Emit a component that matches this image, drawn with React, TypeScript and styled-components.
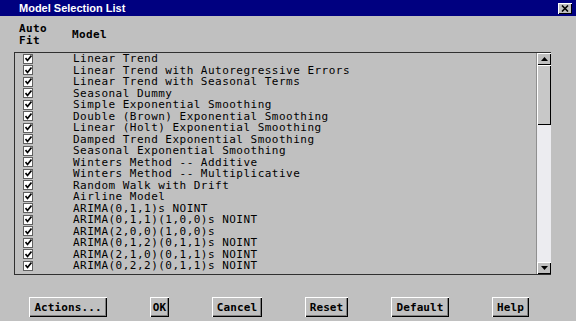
import styled, { createGlobalStyle } from "styled-components";

const models = [
  "Linear Trend",
  "Linear Trend with Autoregressive Errors",
  "Linear Trend with Seasonal Terms",
  "Seasonal Dummy",
  "Simple Exponential Smoothing",
  "Double (Brown) Exponential Smoothing",
  "Linear (Holt) Exponential Smoothing",
  "Damped Trend Exponential Smoothing",
  "Seasonal Exponential Smoothing",
  "Winters Method -- Additive",
  "Winters Method -- Multiplicative",
  "Random Walk with Drift",
  "Airline Model",
  "ARIMA(0,1,1)s NOINT",
  "ARIMA(0,1,1)(1,0,0)s NOINT",
  "ARIMA(2,0,0)(1,0,0)s",
  "ARIMA(0,1,2)(0,1,1)s NOINT",
  "ARIMA(2,1,0)(0,1,1)s NOINT",
  "ARIMA(0,2,2)(0,1,1)s NOINT",
];

const buttons = [
  { label: "Actions...", width: 78 },
  { label: "OK", width: 19 },
  { label: "Cancel", width: 50 },
  { label: "Reset", width: 43 },
  { label: "Default", width: 58 },
  { label: "Help", width: 37 },
];

const GlobalStyle = createGlobalStyle`
  html, body {
    margin: 0;
    padding: 0;
    background: #c0c0c0;
  }
  body {
    font-family: "DejaVu Sans Mono", "Liberation Mono", monospace;
  }
`;

const Window = styled.div`
  width: 576px;
  height: 321px;
  background: #c0c0c0;
  display: flex;
  flex-direction: column;
  overflow: hidden;
`;

const TitleBar = styled.div`
  height: 16px;
  background: #000080;
  display: flex;
  align-items: center;
  justify-content: space-between;
  padding: 0 4px 0 19px;
  color: #fff;
  font: bold 11px "Liberation Sans", Arial, sans-serif;
`;

const CloseButton = styled.div`
  width: 14px;
  height: 11px;
  background: #c0c0c0;
  box-shadow: inset 1px 1px 0 #fff, inset -1px -1px 0 #000;
  display: flex;
  align-items: center;
  justify-content: center;
`;

const Header = styled.div`
  height: 36px;
  display: flex;
  align-items: center;
  padding-left: 19px;
  font-size: 11px;
  font-weight: bold;
  letter-spacing: 0.4px;
  color: #000;
`;

const AutoFit = styled.div`
  width: 53px;
  line-height: 12px;
  padding-top: 1px;
`;

const ListFrame = styled.div`
  margin: 0 25px 0 14px;
  height: 221px;
  display: flex;
  border-top: 1px solid #303030;
  border-left: 1px solid #303030;
  border-bottom: 1px solid #303030;
`;

const Rows = styled.div`
  flex: 1;
  overflow: hidden;
`;

const Row = styled.div`
  height: 11.5px;
  display: flex;
  align-items: center;
  font-size: 11px;
  letter-spacing: 0.48px;
  color: #000;
  white-space: nowrap;
`;

const Check = styled.div`
  width: 8px;
  height: 8px;
  margin: 0 40px 0 8px;
  background: #fff;
  border: 1px solid #606060;
  display: flex;
  align-items: center;
  justify-content: center;
`;

const ScrollBar = styled.div`
  width: 14px;
  display: flex;
  flex-direction: column;
  background: #ececf0;
  border-left: 1px solid #909090;
`;

const Arrow = styled.div`
  height: 12px;
  background: #c0c0c0;
  box-shadow: inset 1px 1px 0 #fff, inset -1px -1px 0 #000;
  display: flex;
  align-items: center;
  justify-content: center;
`;

const Thumb = styled.div`
  height: 60px;
  background: #c8c8c8;
  box-shadow: inset 1px 1px 0 #fff, inset -1px -1px 0 #000;
`;

const Trough = styled.div`
  flex: 1;
`;

const ButtonRow = styled.div`
  display: flex;
  align-items: center;
  padding: 22px 0 0 29px;
  gap: 43px;
`;

const Button = styled.div<{ $w: number }>`
  width: ${(p) => p.$w}px;
  height: 20px;
  box-sizing: border-box;
  background: #c0c0c0;
  box-shadow: inset 1px 1px 0 #fff, inset -1px -1px 0 #000, inset -2px -2px 0 #808080;
  display: flex;
  align-items: center;
  justify-content: center;
  font-size: 11px;
  font-weight: bold;
  letter-spacing: 0.1px;
  color: #000;
`;

function CheckMark() {
  return (
    <svg width="7" height="7" viewBox="0 0 7 7">
      <path d="M0.5 3 L2.5 5.5 L6.5 0.5" stroke="#000" strokeWidth="1.7" fill="none" />
    </svg>
  );
}

function Triangle({ up }: { up: boolean }) {
  return (
    <svg width="7" height="4" viewBox="0 0 7 4">
      <path d={up ? "M0 4 L3.5 0 L7 4 Z" : "M0 0 L3.5 4 L7 0 Z"} fill="#000" />
    </svg>
  );
}

export default function App() {
  return (
    <Window>
      <GlobalStyle />
      <TitleBar>
        <span>Model Selection List</span>
        <CloseButton>
          <svg width="8" height="7" viewBox="0 0 8 7">
            <path d="M1 0.5 L7 6.5 M7 0.5 L1 6.5" stroke="#000" strokeWidth="1.6" />
          </svg>
        </CloseButton>
      </TitleBar>
      <Header>
        <AutoFit>
          Auto
          <br />
          Fit
        </AutoFit>
        <span>Model</span>
      </Header>
      <ListFrame>
        <Rows>
          {models.map((m) => (
            <Row key={m}>
              <Check>
                <CheckMark />
              </Check>
              {m}
            </Row>
          ))}
        </Rows>
        <ScrollBar>
          <Arrow>
            <Triangle up />
          </Arrow>
          <Thumb />
          <Trough />
          <Arrow>
            <Triangle up={false} />
          </Arrow>
        </ScrollBar>
      </ListFrame>
      <ButtonRow>
        {buttons.map((b) => (
          <Button key={b.label} $w={b.width}>
            {b.label}
          </Button>
        ))}
      </ButtonRow>
    </Window>
  );
}
